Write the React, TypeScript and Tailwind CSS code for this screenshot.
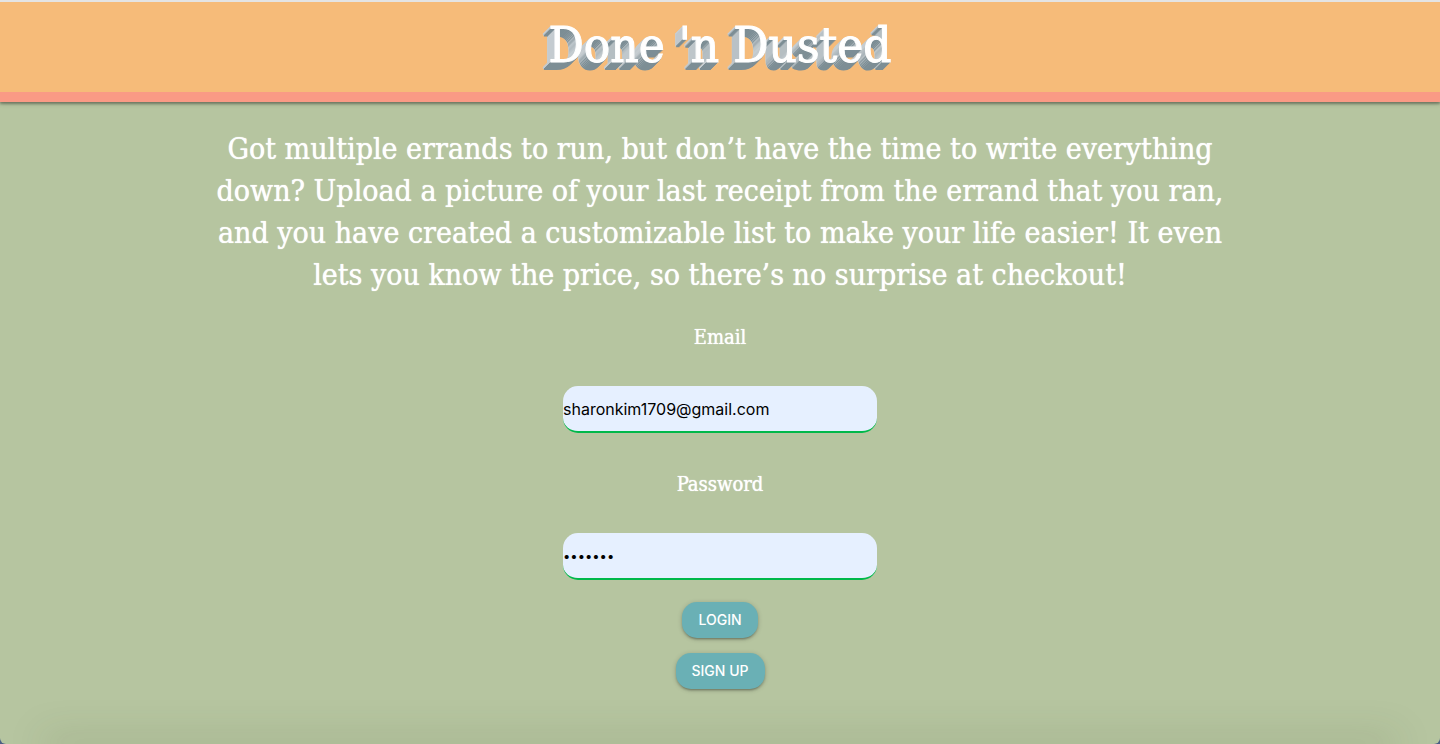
import { useState } from "react";

const intro = [
  "Got multiple errands to run, but don’t have the time to write everything",
  "down? Upload a picture of your last receipt from the errand that you ran,",
  "and you have created a customizable list to make your life easier! It even",
  "lets you know the price, so there’s no surprise at checkout!",
];

// Extruded lettering: light faces to the left, dark faces underneath.
const extrusion = Array.from({ length: 8 }, (_, i) => [
  `${-i}px ${i + 1}px #7d8e95`,
  `${-(i + 1)}px ${i}px #c6cdd1`,
])
  .flat()
  .join(", ");

type FieldProps = {
  id: string;
  label: string;
  type: string;
  value: string;
  onChange: (value: string) => void;
};

function Field({ id, label, type, value, onChange }: FieldProps) {
  return (
    <div className="flex w-full flex-col items-center">
      <label htmlFor={id} className="text-[20px] leading-7 [text-shadow:0_0_1px_#ffffff]">
        {label}
      </label>
      <input
        id={id}
        type={type}
        value={value}
        onChange={(e) => onChange(e.target.value)}
        className={`mt-[35px] h-[47px] w-full rounded-[15px] border-b-2 border-[#00b84a] bg-[#e6f0ff] font-[Inter,sans-serif] text-black outline-none ${
          type === "password" ? "text-[13px]" : "text-base"
        }`}
      />
    </div>
  );
}

const buttonClass =
  "h-9 rounded-[15px] bg-[#6ab0b5] px-4 font-[Inter,sans-serif] text-sm font-medium text-white uppercase shadow-[0_2px_2px_0_rgba(0,0,0,0.14),0_3px_1px_-2px_rgba(0,0,0,0.12),0_1px_5px_0_rgba(0,0,0,0.2)]";

export default function App() {
  const [email, setEmail] = useState("sharonkim1709@gmail.com");
  const [password, setPassword] = useState("errands");

  return (
    <div className="min-h-screen bg-[#4a5f85]">
      <div className="flex min-h-screen flex-col overflow-hidden rounded-b-[6px] bg-[#b6c5a0] font-['DejaVu_Serif_Condensed','DejaVu_Serif',serif] text-white">
        <header className="relative border-t-2 border-b-10 border-t-[#e4e4e4] border-b-[#fa9a85] bg-[#f6bb79] pt-[10px] pb-[13px] text-center shadow-[0_2px_2px_0_rgba(0,0,0,0.24),0_1px_5px_0_rgba(0,0,0,0.3)]">
          <h1
            className="text-[49px] leading-[67px] [-webkit-text-stroke:1px_#ffffff]"
            style={{ textShadow: extrusion }}
          >
            Done 'n Dusted
          </h1>
        </header>
        <main className="flex grow flex-col items-center px-4 pt-[26px]">
          <p className="text-center text-[30px] leading-[42px] [text-shadow:0_0_1px_#ffffff]">
            {intro.map((line) => (
              <span key={line} className="block">
                {line}
              </span>
            ))}
          </p>
          <form
            className="mt-[27px] flex w-full max-w-[314px] flex-col items-center"
            onSubmit={(e) => e.preventDefault()}
          >
            <div className="flex w-full flex-col gap-[37px]">
              <Field id="email" label="Email" type="email" value={email} onChange={setEmail} />
              <Field id="password" label="Password" type="password" value={password} onChange={setPassword} />
            </div>
            <div className="mt-[22px] flex flex-col items-center gap-[15px]">
              <button type="submit" className={buttonClass}>
                Login
              </button>
              <button type="button" className={buttonClass}>
                Sign up
              </button>
            </div>
          </form>
        </main>
        <div className="mx-12 h-0 shadow-[0_0_36px_4px_rgba(60,75,40,0.35)]" />
      </div>
    </div>
  );
}
